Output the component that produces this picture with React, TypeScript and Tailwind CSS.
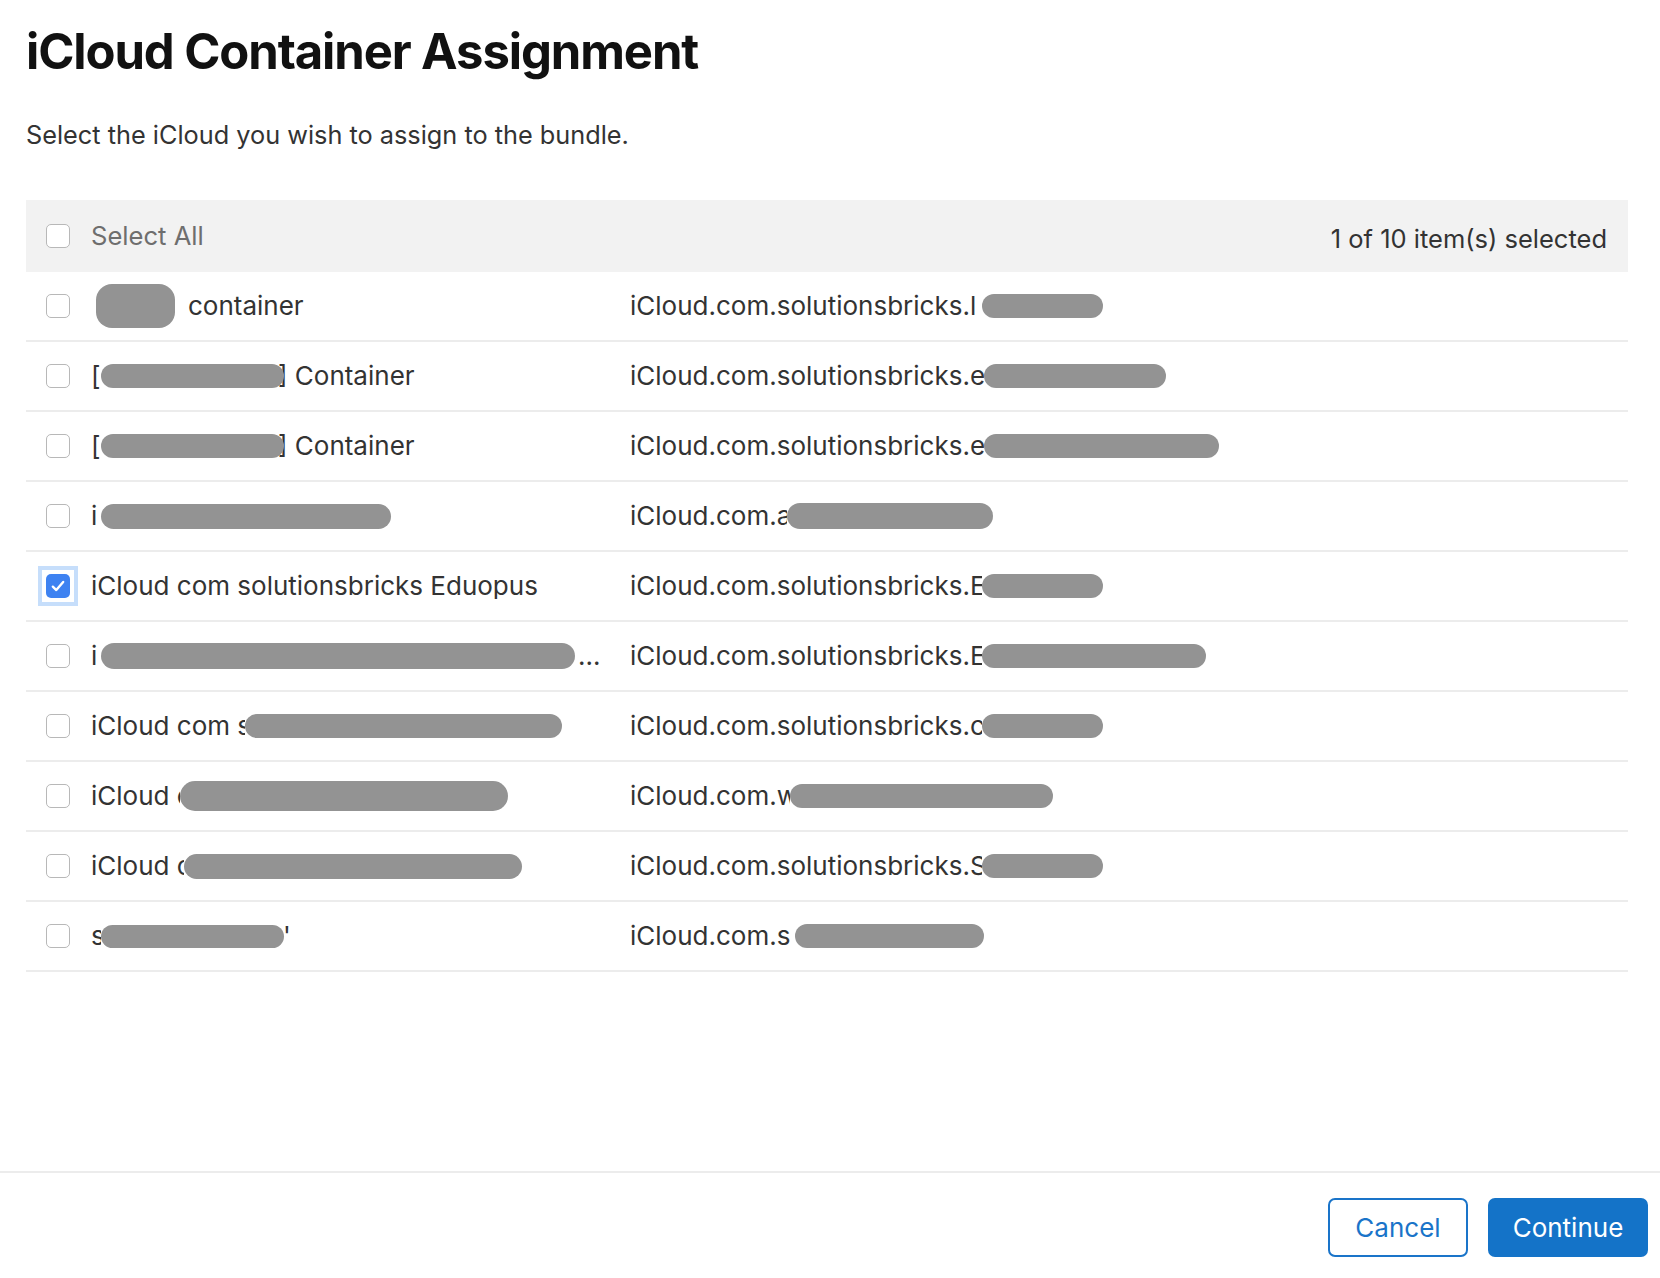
import React from "react";

type Seg =
  | { t: "text"; v: string; w?: number; cls?: string }
  | { t: "blob"; w: number; h: number; r?: number; ml?: number };

type Row = { name: Seg[]; idPrefix: string; idW: number; blobW: number; blobH: number; checked?: boolean };

const Blob = ({ w, h, r, ml }: { w: number; h: number; r?: number; ml?: number }) => (
  <span
    className="relative z-10 inline-block shrink-0 bg-[#939393]"
    style={{ width: w, height: h, borderRadius: r ?? h / 2, marginLeft: ml ?? 0 }}
  />
);

const rows: Row[] = [
  {
    name: [
      { t: "blob", w: 79, h: 44, r: 16, ml: 5 },
      { t: "text", v: "container", cls: "ml-[13px]" },
    ],
    idPrefix: "iCloud.com.solutionsbricks.l",
    idW: 352,
    blobW: 121,
    blobH: 24,
  },
  {
    name: [
      { t: "text", v: "[", w: 10 },
      { t: "blob", w: 183, h: 24 },
      { t: "text", v: "] Container", cls: "-ml-[6px]" },
    ],
    idPrefix: "iCloud.com.solutionsbricks.e",
    idW: 354,
    blobW: 182,
    blobH: 24,
  },
  {
    name: [
      { t: "text", v: "[", w: 10 },
      { t: "blob", w: 183, h: 24 },
      { t: "text", v: "] Container", cls: "-ml-[6px]" },
    ],
    idPrefix: "iCloud.com.solutionsbricks.e",
    idW: 354,
    blobW: 235,
    blobH: 24,
  },
  {
    name: [
      { t: "text", v: "i", w: 10 },
      { t: "blob", w: 290, h: 25 },
    ],
    idPrefix: "iCloud.com.a",
    idW: 157,
    blobW: 206,
    blobH: 26,
  },
  {
    name: [{ t: "text", v: "iCloud com solutionsbricks Eduopus" }],
    idPrefix: "iCloud.com.solutionsbricks.E",
    idW: 352,
    blobW: 121,
    blobH: 24,
    checked: true,
  },
  {
    name: [
      { t: "text", v: "i", w: 10 },
      { t: "blob", w: 474, h: 26 },
      { t: "text", v: "...", cls: "ml-[3px]" },
    ],
    idPrefix: "iCloud.com.solutionsbricks.E",
    idW: 352,
    blobW: 224,
    blobH: 24,
  },
  {
    name: [
      { t: "text", v: "iCloud com s", w: 154 },
      { t: "blob", w: 317, h: 24 },
    ],
    idPrefix: "iCloud.com.solutionsbricks.c",
    idW: 352,
    blobW: 121,
    blobH: 24,
  },
  {
    name: [
      { t: "text", v: "iCloud c", w: 89 },
      { t: "blob", w: 328, h: 30 },
    ],
    idPrefix: "iCloud.com.w",
    idW: 160,
    blobW: 263,
    blobH: 24,
  },
  {
    name: [
      { t: "text", v: "iCloud c", w: 93 },
      { t: "blob", w: 338, h: 25 },
    ],
    idPrefix: "iCloud.com.solutionsbricks.S",
    idW: 352,
    blobW: 121,
    blobH: 24,
  },
  {
    name: [
      { t: "text", v: "s", w: 10 },
      { t: "blob", w: 183, h: 23 },
      { t: "text", v: "'", cls: "-ml-[1px]" },
    ],
    idPrefix: "iCloud.com.s",
    idW: 165,
    blobW: 189,
    blobH: 24,
  },
];

const Checkbox = ({ checked }: { checked?: boolean }) =>
  checked ? (
    <span className="relative flex h-6 w-6 shrink-0">
      <span className="absolute -inset-[8px] bg-[#c6defb]" />
      <span className="absolute -inset-[4px] bg-white" />
      <span className="relative flex h-6 w-6 items-center justify-center rounded-[5px] bg-[#3e82f1]">
        <svg width="18" height="18" viewBox="0 0 16 16" fill="none">
          <path d="M3.4 8.6 L6.5 11.6 L12.6 4.4" stroke="white" strokeWidth="2.1" strokeLinecap="round" strokeLinejoin="round" />
        </svg>
      </span>
    </span>
  ) : (
    <span className="block h-6 w-6 shrink-0 rounded-[5px] border-[1.5px] border-[#b8b8b8] bg-white" />
  );

export default function App() {
  return (
    <div className="flex h-[1278px] w-[1660px] flex-col bg-white font-['Inter',sans-serif] text-[#333333]">
      <div className="pl-[26px] pr-[32px] pt-[27px]">
        <h1 className="h-[50px] text-[49px] font-bold leading-[50px] tracking-[-1.1px] text-[#111111]">
          iCloud Container Assignment
        </h1>
        <p className="mt-[45px] h-[26px] text-[25.3px] leading-[26px] text-[#333333]">
          Select the iCloud you wish to assign to the bundle.
        </p>

        <div className="mt-[52px]">
          <div className="flex h-[72px] items-center bg-[#f2f2f2] pl-[20px] pr-[21px]">
            <Checkbox />
            <span className="ml-[21px] text-[25.6px] leading-none text-[#6e6e6e]">Select All</span>
            <span className="ml-auto mt-[6px] text-[25.5px] leading-none text-[#333333]">
              1 of 10 item(s) selected
            </span>
          </div>

          {rows.map((r, i) => (
            <div
              key={i}
              className="flex h-[70px] items-center border-b-2 border-[#ececec] pl-[20px] text-[26px] leading-none"
            >
              <Checkbox checked={r.checked} />
              <div className="ml-[21px] flex w-[539px] items-center whitespace-nowrap">
                {r.name.map((s, j) =>
                  s.t === "blob" ? (
                    <Blob key={j} w={s.w} h={s.h} r={s.r} ml={s.ml} />
                  ) : (
                    <span
                      key={j}
                      className={"relative inline-block overflow-hidden " + (s.cls ?? "")}
                      style={s.w ? { width: s.w } : undefined}
                    >
                      {s.v}
                    </span>
                  )
                )}
              </div>
              <div className="flex items-center whitespace-nowrap">
                <span className="inline-block overflow-hidden" style={{ width: r.idW }}>
                  {r.idPrefix}
                </span>
                <Blob w={r.blobW} h={r.blobH} />
              </div>
            </div>
          ))}
        </div>
      </div>

      <div className="mt-auto flex justify-end gap-[20px] border-t-2 border-[#ececec] pb-[21px] pr-[12px] pt-[25px]">
        <button className="flex h-[59px] w-[140px] items-center justify-center rounded-[7px] border-2 border-[#1a74c9] bg-white text-[26px] leading-none text-[#1a74c9]">
          Cancel
        </button>
        <button className="flex h-[59px] w-[160px] items-center justify-center rounded-[7px] bg-[#1473c8] text-[26px] leading-none text-white">
          Continue
        </button>
      </div>
    </div>
  );
}
